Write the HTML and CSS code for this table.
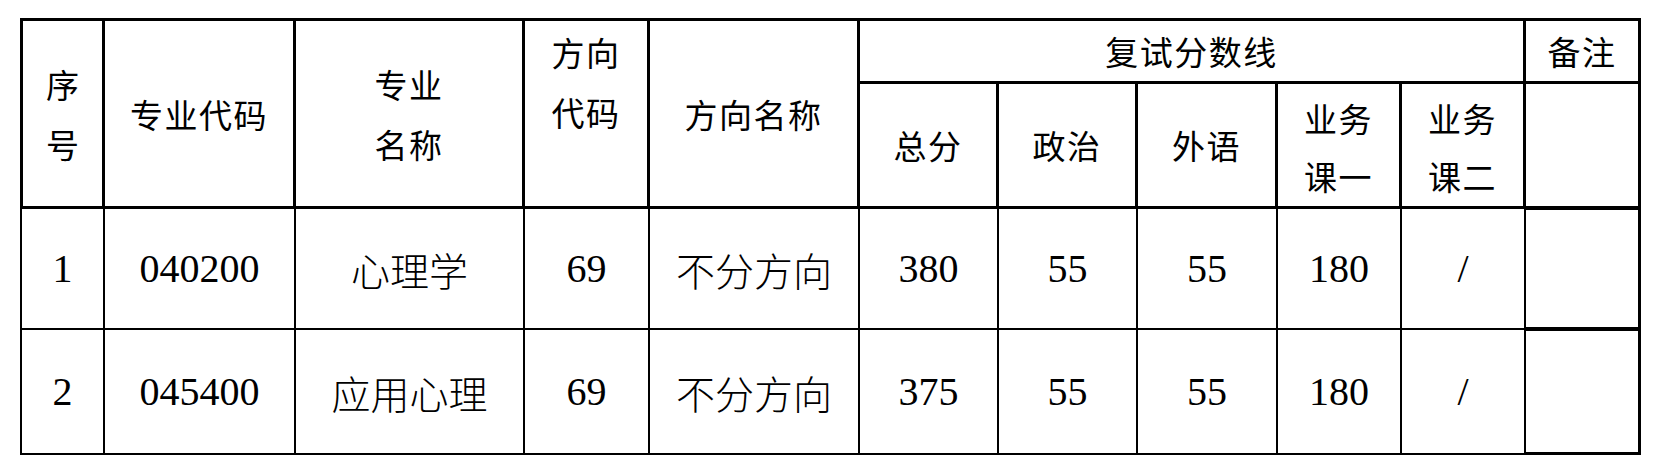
FILE: index.html
```html
<!DOCTYPE html>
<html lang="zh-CN">
<head>
<meta charset="utf-8">
<title>复试分数线</title>
<link rel="stylesheet" href="styles.css">
</head>
<body>
<div class="sheet">
  <div class="cell head first top rows2">序<br>号</div>
  <div class="cell head top rows2">专业代码</div>
  <div class="cell head top rows2">专业<br>名称</div>
  <div class="cell head top rows2 upper">方向<br>代码</div>
  <div class="cell head top rows2">方向名称</div>
  <div class="cell head top cols5">复试分数线</div>
  <div class="cell head top note">备注</div>

  <div class="cell head">总分</div>
  <div class="cell head">政治</div>
  <div class="cell head">外语</div>
  <div class="cell head tight">业务<br>课一</div>
  <div class="cell head tight">业务<br>课二</div>
  <div class="cell head note"></div>

  <div class="cell data first">1</div>
  <div class="cell data">040200</div>
  <div class="cell data cjk">心理学</div>
  <div class="cell data">69</div>
  <div class="cell data cjk">不分方向</div>
  <div class="cell data">380</div>
  <div class="cell data">55</div>
  <div class="cell data">55</div>
  <div class="cell data">180</div>
  <div class="cell data">/</div>
  <div class="cell data note"></div>

  <div class="cell data first">2</div>
  <div class="cell data">045400</div>
  <div class="cell data cjk">应用心理</div>
  <div class="cell data">69</div>
  <div class="cell data cjk">不分方向</div>
  <div class="cell data">375</div>
  <div class="cell data">55</div>
  <div class="cell data">55</div>
  <div class="cell data">180</div>
  <div class="cell data">/</div>
  <div class="cell data note"></div>
</div>
</body>
</html>
```

FILE: styles.css
```css
html, body {
  margin: 0;
  padding: 0;
  background: #fff;
}

body {
  width: 1656px;
  height: 468px;
  overflow: hidden;
}

.sheet {
  margin: 18px 0 0 20px;
  display: grid;
  grid-template-columns: 85px 191px 229px 125px 210px 139px 139px 140px 124px 124px 115px;
  grid-template-rows: 66px 125px 121px 125px;
  width: 1621px;
  color: #000;
}

.cell {
  box-sizing: border-box;
  display: flex;
  align-items: center;
  justify-content: center;
  text-align: center;
  border-right: 2px solid #000;
  border-bottom: 2px solid #000;
}

.head {
  font-family: "Noto Sans CJK SC", "Noto Sans", sans-serif;
  font-size: 33px;
  letter-spacing: 1.5px;
  line-height: 60px;
  border-right-width: 3px;
  border-bottom-width: 3px;
}

.head.first {
  letter-spacing: 0;
}

.top {
  border-top: 3px solid #000;
}

.first {
  border-left: 3px solid #000;
}

.data.first {
  border-left-width: 2px;
}

.rows2 {
  grid-row: span 2;
}

.cols5 {
  grid-column: span 5;
}

.upper {
  align-items: flex-start;
  padding-top: 1px;
}

.tight {
  line-height: 58px;
  padding-top: 4px;
}

.data {
  font-family: "Liberation Serif", "Noto Sans CJK SC", serif;
  font-size: 40px;
  line-height: 48px;
}

.data.cjk {
  font-family: "Noto Sans CJK SC", sans-serif;
  font-weight: 300;
  font-size: 39px;
}

.note {
  border-right-width: 3px;
  border-bottom-width: 3px;
}

.data.note {
  border-top: 1px solid #000;
}
```
